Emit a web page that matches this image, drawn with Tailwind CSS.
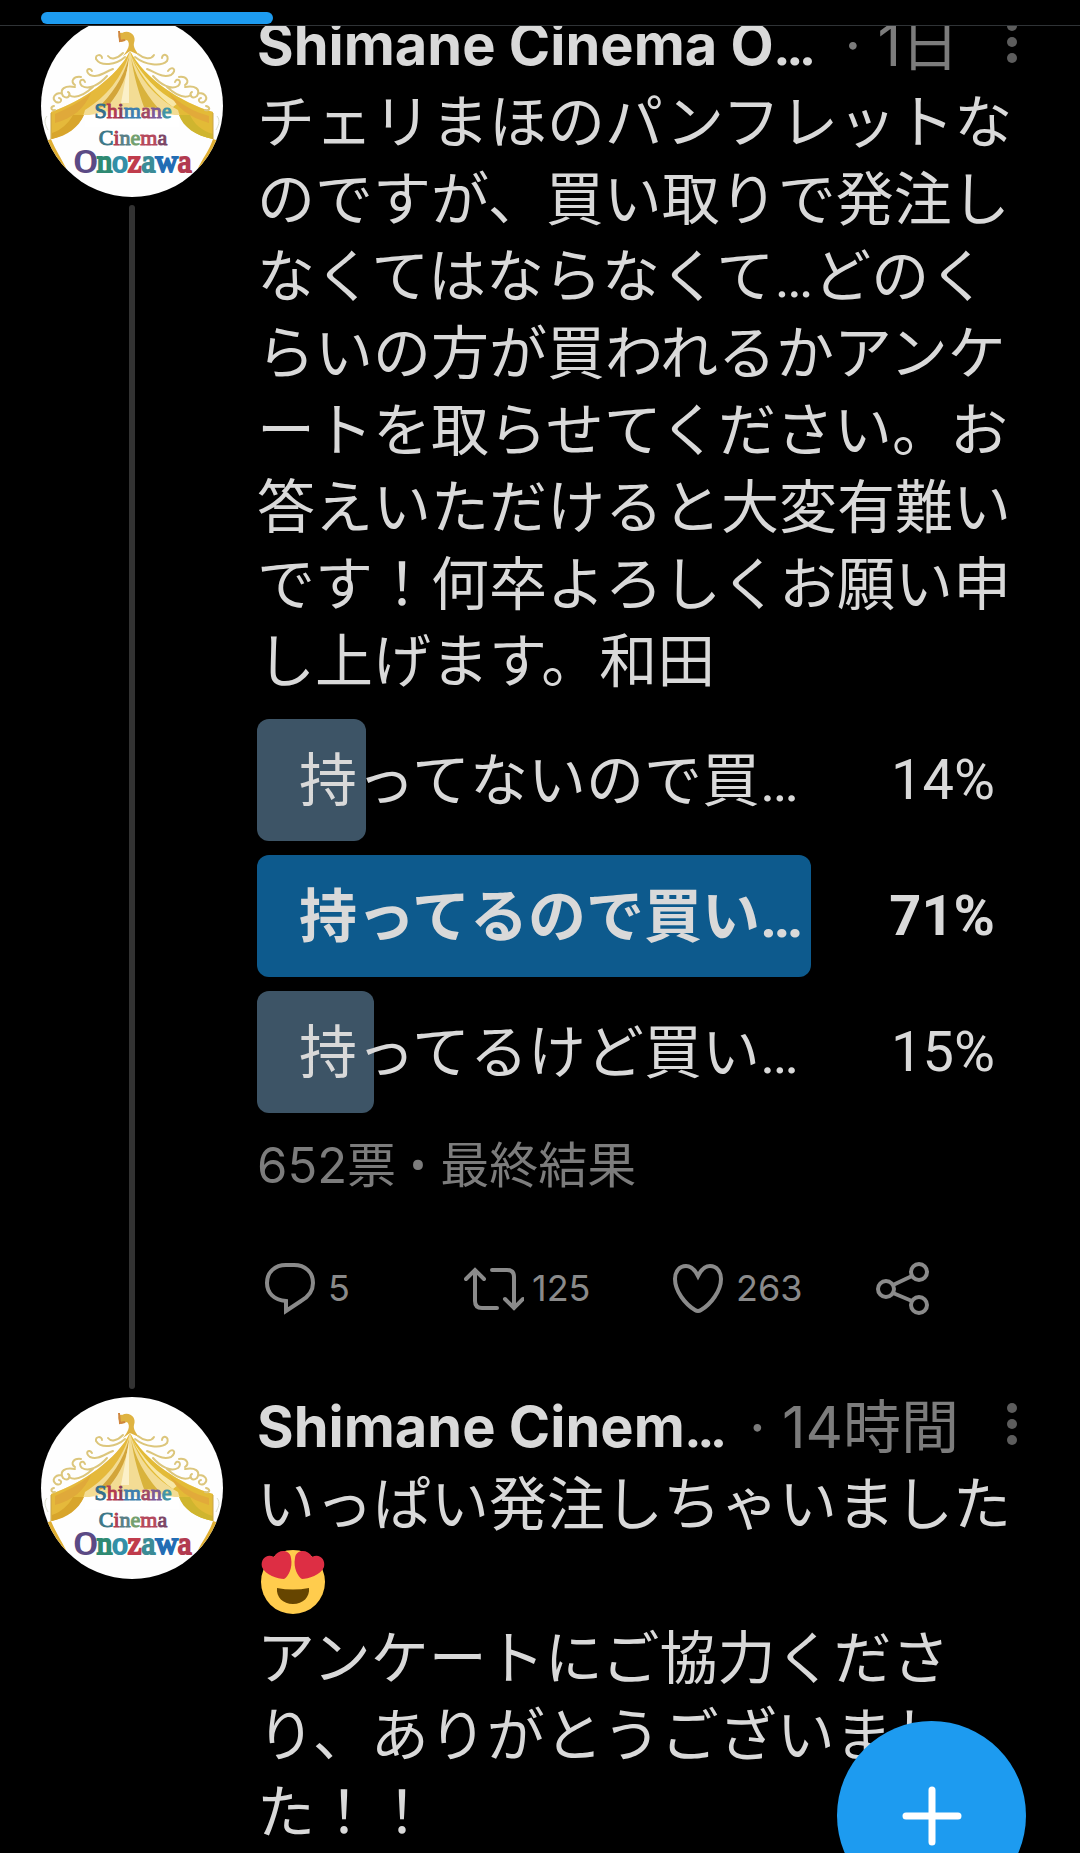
<!DOCTYPE html>
<html lang="ja">

<head>
    <meta charset="UTF-8">
    <meta name="viewport" content="width=device-width, initial-scale=1.0">
    <title>Shimane Cinema Onozawa</title>
    <script src="https://cdn.jsdelivr.net/npm/@tailwindcss/browser@4"></script>
</head>

<body class="bg-black text-[#d9d9d9] font-[Inter,'Noto_Sans_CJK_JP',sans-serif] text-[58px] leading-[77px] min-h-screen overflow-x-hidden">

    <!-- Shared artwork -->
    <svg class="hidden" aria-hidden="true">
        <symbol id="avatar" viewBox="0 0 182 182">
            <rect width="182" height="182" fill="#fefefe"/>
            <!-- tent roof -->
            <path d="M89 36C76 62 42 86 10 97V124C25 120 38 111 43 100H138C143 112 156 121 172 124V97C139 87 104 64 89 36Z" fill="#f3dc94"/>
            <path d="M89 36C76 62 42 86 10 97V124C27 120 41 109 44 95C65 82 82 62 89 36Z" fill="#e5b93b"/>
            <path d="M89 36C104 64 139 87 172 97V124C156 121 141 111 137 95C114 82 96 62 89 36Z" fill="#e3bb37"/>
            <path d="M88 42C82 64 70 80 57 93L68 90C80 75 87 60 88 42Z" fill="#d3a53a"/>
            <path d="M88 45L80 88H88Z" fill="#fbf0c8"/>
            <path d="M90 42C93 62 98 78 103 92L117 93C103 77 94 60 90 42Z" fill="#d9b33c"/>
            <path d="M91 42C102 66 118 82 132 92L137 88C115 76 101 60 91 42Z" fill="#f8e7a6"/>
            <path d="M50 78C38 88 25 94 14 99V108C32 103 43 94 50 78Z" fill="#e0a93a"/>
            <path d="M128 78C140 90 154 97 168 101V108C148 102 136 93 128 78Z" fill="#e2aa3a"/>
            <path d="M32 100C27 109 20 115 11 118V124C26 121 38 112 43 100Z" fill="#d8a52c"/>
            <path d="M149 100C153 109 161 116 172 119V124C155 121 142 112 138 100Z" fill="#cfb52f"/>
            <path d="M10 124C15 136 20 143 25 153C18 152 9 140 5 126Z" fill="#dfae32"/>
            <path d="M172 124C168 136 162 143 157 153C164 152 174 140 178 126Z" fill="#dfae32"/>
            <path d="M10 98V124M172 98V124" stroke="#c9a445" stroke-width="1"/>
            <!-- finial -->
            <path d="M80 27C76 22 77 17 81 18C88 14 96 20 93 28C92 32 95 36 98 40L89 36L82 41C87 35 90 29 86 25Z" fill="#dfb341"/>
            <path d="M78 16L79 26L84 25" fill="none" stroke="#cf8640" stroke-width="2"/>
            <!-- scrollwork -->
            <g fill="none" stroke="#dcc67c" stroke-width="2" stroke-linecap="round">
                <path d="M84 42C75 50 60 52 55 44C54 39 61 39 61 43M82 38C76 44 70 45 67 41"/>
                <path d="M94 42C104 50 120 52 126 46C129 39 121 38 121 43M97 39C103 44 110 45 113 40"/>
                <path d="M72 54C62 58 57 63 49 60C43 56 48 51 51 56M66 61C58 70 48 75 41 71C36 66 42 62 44 67M52 72C42 81 34 84 28 80M40 62C32 61 29 67 34 70M34 72C24 70 18 74 22 81C27 85 31 79 27 77M20 78C14 78 10 83 15 87C20 89 22 84 18 83M13 91C9 92 10 96 14 95"/>
                <path d="M106 54C116 58 121 63 130 60C137 55 131 50 127 56M112 61C120 70 130 75 137 71C142 66 136 62 134 67M126 72C136 81 144 84 150 80M138 62C146 61 149 67 144 70M144 72C154 70 160 74 156 81C151 85 147 79 151 77M158 78C164 78 168 83 163 87C158 89 156 84 160 83M165 91C169 92 170 96 164 95"/>
            </g>
            <g fill="none" stroke="#d9dccb" stroke-width="1">
                <path d="M6 101C2 106 5 111 7 115M176 101C180 106 177 111 175 115"/>
            </g>
            <path d="M44 101Q91 88 138 101V112H44Z" fill="#fff" fill-opacity=".65"/>
            <!-- lettering -->
            <g font-family="Liberation Serif, serif" text-anchor="middle" stroke-width="1">
                <text x="92" y="103" font-size="22"><tspan fill="#356f8c" stroke="#356f8c">S</tspan><tspan fill="#b23c50" stroke="#b23c50">h</tspan><tspan fill="#8a3a5a" stroke="#8a3a5a">i</tspan><tspan fill="#3f7fae" stroke="#3f7fae">m</tspan><tspan fill="#a04a66" stroke="#a04a66">a</tspan><tspan fill="#7d5a95" stroke="#7d5a95">n</tspan><tspan fill="#3f93a6" stroke="#3f93a6">e</tspan></text>
                <text x="92" y="130" font-size="22"><tspan fill="#3c7888" stroke="#3c7888">C</tspan><tspan fill="#b03f52" stroke="#b03f52">i</tspan><tspan fill="#5a7f86" stroke="#5a7f86">n</tspan><tspan fill="#73a06e" stroke="#73a06e">e</tspan><tspan fill="#b5485c" stroke="#b5485c">m</tspan><tspan fill="#7a4566" stroke="#7a4566">a</tspan></text>
                <text x="92" y="157" font-size="31" stroke-width="2"><tspan fill="#5b4a85" stroke="#5b4a85">O</tspan><tspan fill="#2f8a72" stroke="#2f8a72">n</tspan><tspan fill="#338fa8" stroke="#338fa8">o</tspan><tspan fill="#c03c4c" stroke="#c03c4c">z</tspan><tspan fill="#3b8b96" stroke="#3b8b96">a</tspan><tspan fill="#236db4" stroke="#236db4">w</tspan><tspan fill="#b23a50" stroke="#b23a50">a</tspan></text>
            </g>
        </symbol>
        <symbol id="dots" viewBox="0 0 14 48">
            <g fill="#5d5d5d">
                <circle cx="7" cy="8" r="5"/>
                <circle cx="7" cy="24" r="5"/>
                <circle cx="7" cy="40" r="5"/>
            </g>
        </symbol>
    </svg>

    <header class="relative z-10 h-[26px] bg-black border-b border-[#2f3336] px-[41px] pt-3">
        <div class="w-[232px] h-3 rounded-full bg-[#1d9bf0]"></div>
    </header>

    <main class="-mt-[11px] pl-[41px] pr-[43px]">

        <article class="flex gap-[34px]">
            <div class="flex flex-col items-center shrink-0 gap-2">
                <svg class="size-[182px] rounded-full" role="img" aria-label="Shimane Cinema Onozawa"><use href="#avatar"/></svg>
                <div class="w-[6px] grow rounded-full bg-[#333333] mb-2"></div>
            </div>
            <div class="grow min-w-0 -mt-[8px]">
                <div class="flex items-center pr-[18px]">
                    <h2 class="font-bold text-[56px] whitespace-nowrap">Shimane Cinema O<span class="font-[Roboto] leading-none">…</span></h2>
                    <span class="ml-auto text-[#7c7c7c] whitespace-nowrap">· 1日</span>
                    <button class="ml-[46px] shrink-0 mb-2" aria-label="メニュー"><svg class="w-[14px] h-12"><use href="#dots"/></svg></button>
                </div>
                <p class="whitespace-nowrap">チェリまほのパンフレットな<br>のですが、買い取りで発注し<br>なくてはならなくて<span class="font-[Roboto] leading-none">…</span>どのく<br>らいの方が買われるかアンケ<br>ートを取らせてください。お<br>答えいただけると大変有難い<br>です！何卒よろしくお願い申<br>し上げます。和田</p>

                <!-- Poll results -->
                <ul class="flex flex-col gap-[14px] mt-[19px]">
                    <li class="relative flex items-center h-[122px] px-[42px]">
                        <div class="absolute inset-y-0 left-0 rounded-xl bg-[#3d5466]" style="width: 14%"></div>
                        <span class="relative">持ってないので買<span class="font-[Roboto] leading-none">…</span></span>
                        <span class="relative ml-auto font-[Roboto] text-[56px]">14%</span>
                    </li>
                    <li class="relative flex items-center h-[122px] px-[42px] font-bold">
                        <div class="absolute inset-y-0 left-0 rounded-xl bg-[#0d5a8d]" style="width: 71%"></div>
                        <span class="relative">持ってるので買い<span class="font-[Roboto] leading-none">…</span></span>
                        <span class="relative ml-auto font-[Roboto] text-[56px]">71%</span>
                    </li>
                    <li class="relative flex items-center h-[122px] px-[42px]">
                        <div class="absolute inset-y-0 left-0 rounded-xl bg-[#3d5466]" style="width: 15%"></div>
                        <span class="relative">持ってるけど買い<span class="font-[Roboto] leading-none">…</span></span>
                        <span class="relative ml-auto font-[Roboto] text-[56px]">15%</span>
                    </li>
                </ul>
                <p class="mt-[14px] text-[49px] text-[#7c7c7c]">652票 <span class="font-[Roboto] leading-none">•</span> 最終結果</p>

                <div class="grid grid-cols-[1fr_1fr_1fr_auto] mt-[54px] mb-[79px] pl-[3px] pr-[105px] text-[36px] leading-[60px] text-[#8a8a8a]">
                    <button class="flex items-center gap-2" aria-label="返信 5">
                        <svg class="size-[60px]" viewBox="0 0 60 60" fill="none" stroke="currentColor" stroke-width="4">
                            <path d="M26 43C14 42 7 35 7 25C7 14 15 7 26 7H34C45 7 53 14 53 25C53 34 48 39 41 43L26 53Z"/>
                        </svg>5
                    </button>
                    <button class="flex items-center gap-2" aria-label="リツイート 125">
                        <svg class="size-[60px]" viewBox="0 0 60 60" fill="none" stroke="currentColor" stroke-width="4" stroke-linecap="round">
                            <path d="M2 21L11 12L20 21M11 13V43Q11 50 18 50H33M28 12H43Q50 12 50 19V50M41 41L50 50L59 41"/>
                        </svg>125
                    </button>
                    <button class="flex items-center gap-2" aria-label="いいね 263">
                        <svg class="size-[60px]" viewBox="0 0 60 60" fill="none" stroke="currentColor" stroke-width="4">
                            <path d="M30 18C27 12 23 8 18 8C11 8 7 14 7 21C7 33 17 46 27 52Q30 54 33 52C43 46 53 33 53 21C53 14 49 8 42 8C37 8 33 12 30 18Z"/>
                        </svg>263
                    </button>
                    <button aria-label="共有">
                        <svg class="size-[60px]" viewBox="0 0 60 60" fill="none" stroke="currentColor" stroke-width="4">
                            <circle cx="14" cy="31" r="8"/>
                            <circle cx="47" cy="14" r="8"/>
                            <circle cx="47" cy="47" r="8"/>
                            <path d="M21 27L40 18M21 35L40 43"/>
                        </svg>
                    </button>
                </div>
            </div>
        </article>

        <article class="flex gap-[34px]">
            <div class="shrink-0">
                <svg class="size-[182px] rounded-full" role="img" aria-label="Shimane Cinema Onozawa"><use href="#avatar"/></svg>
            </div>
            <div class="grow min-w-0 -mt-[8px]">
                <div class="flex items-center pr-[18px]">
                    <h2 class="font-bold text-[56px] whitespace-nowrap">Shimane Cinem<span class="font-[Roboto] leading-none">…</span></h2>
                    <span class="ml-auto text-[#7c7c7c] whitespace-nowrap">· 14時間</span>
                    <button class="ml-[46px] shrink-0 mb-2" aria-label="メニュー"><svg class="w-[14px] h-12"><use href="#dots"/></svg></button>
                </div>
                <p class="whitespace-nowrap">いっぱい発注しちゃいました</p>
                <div class="flex items-center h-[77px]">
                    <svg class="size-[72px]" viewBox="0 0 72 72" role="img" aria-label="😍">
                        <circle cx="36" cy="36" r="32" fill="#ffcc4d"/>
                        <path d="M20 42Q36 45 52 42C53 51 46 58 36 58C26 58 19 51 20 42Z" fill="#664500"/>
                        <path d="M34 12C36 22 31 31 27 33C21 33 8 29 5 21C3 13 10 7 17 11C21 3 33 3 34 12Z" fill="#dd2e44"/>
                        <path d="M38 12C36 22 41 31 45 33C51 33 64 29 67 21C69 13 62 7 55 11C51 3 39 3 38 12Z" fill="#dd2e44"/>
                    </svg>
                </div>
                <p class="whitespace-nowrap">アンケートにご協力くださ<br>り、ありがとうございまし<br>た！！</p>
            </div>
        </article>
    </main>

    <button class="fixed right-[54px] -bottom-[57px] size-[189px] rounded-full bg-[#1d9bf0] flex items-center justify-center" aria-label="ツイートする">
        <svg class="size-[60px]" viewBox="0 0 60 60" fill="none" stroke="#fff" stroke-width="7" stroke-linecap="round"><path d="M30 4V56M4 30H56"/></svg>
    </button>
</body>
</html>
